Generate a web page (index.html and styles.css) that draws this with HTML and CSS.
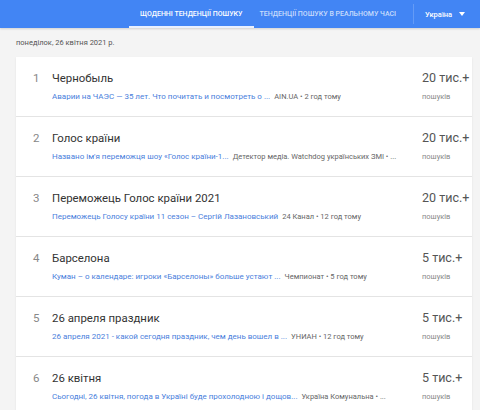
FILE: index.html
```html
<!DOCTYPE html>
<html lang="uk">
<head>
<meta charset="utf-8">
<link rel="stylesheet" href="styles.css">
</head>
<body>
<header class="topbar">
  <div class="tab tab-active">Щоденні тенденції пошуку</div>
  <div class="tab">Тенденції пошуку в реальному часі</div>
  <div class="region">Україна <span class="caret"></span></div>
</header>
<main class="content">
  <div class="date">понеділок, 26 квітня 2021 р.</div>
  <section class="card">
    <div class="row">
      <div class="num">1</div>
      <div class="main">
        <div class="title">Чернобыль</div>
        <div class="sub"><span class="link">Аварии на ЧАЭС — 35 лет. Что почитать и посмотреть о ...</span><span class="src">AIN.UA • 2 год тому</span></div>
      </div>
      <div class="metric"><div class="count">20 тис.+</div><div class="unit">пошуків</div></div>
    </div>
    <div class="row">
      <div class="num">2</div>
      <div class="main">
        <div class="title">Голос країни</div>
        <div class="sub"><span class="link">Названо ім'я переможця шоу «Голос країни-1...</span><span class="src">Детектор медіа. Watchdog українських ЗМІ • ...</span></div>
      </div>
      <div class="metric"><div class="count">20 тис.+</div><div class="unit">пошуків</div></div>
    </div>
    <div class="row">
      <div class="num">3</div>
      <div class="main">
        <div class="title">Переможець Голос країни 2021</div>
        <div class="sub"><span class="link">Переможець Голосу країни 11 сезон – Сергій Лазановський</span><span class="src">24 Канал • 12 год тому</span></div>
      </div>
      <div class="metric"><div class="count">20 тис.+</div><div class="unit">пошуків</div></div>
    </div>
    <div class="row">
      <div class="num">4</div>
      <div class="main">
        <div class="title">Барселона</div>
        <div class="sub"><span class="link">Куман – о календаре: игроки «Барселоны» больше устают ...</span><span class="src">Чемпионат • 5 год тому</span></div>
      </div>
      <div class="metric"><div class="count">5 тис.+</div><div class="unit">пошуків</div></div>
    </div>
    <div class="row">
      <div class="num">5</div>
      <div class="main">
        <div class="title">26 апреля праздник</div>
        <div class="sub"><span class="link">26 апреля 2021 - какой сегодня праздник, чем день вошел в ...</span><span class="src">УНИАН • 12 год тому</span></div>
      </div>
      <div class="metric"><div class="count">5 тис.+</div><div class="unit">пошуків</div></div>
    </div>
    <div class="row">
      <div class="num">6</div>
      <div class="main">
        <div class="title">26 квітня</div>
        <div class="sub"><span class="link">Сьогодні, 26 квітня, погода в Україні буде прохолодною і дощов...</span><span class="src">Україна Комунальна • ...</span></div>
      </div>
      <div class="metric"><div class="count">5 тис.+</div><div class="unit">пошуків</div></div>
    </div>
  </section>
</main>
</body>
</html>
```

FILE: styles.css
```css
* { box-sizing: border-box; }
html, body { margin: 0; padding: 0; }
body {
  width: 480px;
  height: 410px;
  overflow: hidden;
  background: #f4f4f4;
  font-family: Roboto, "Noto Sans", Arial, sans-serif;
}
.topbar {
  height: 28px;
  background: #4285f4;
  display: flex;
  align-items: stretch;
  padding-left: 129px;
  box-shadow: 0 1px 2px rgba(0,0,0,0.15);
}
.tab {
  display: flex;
  align-items: center;
  padding: 0 11px;
  font-size: 7px;
  font-weight: 500;
  text-transform: uppercase;
  color: rgba(255,255,255,0.72);
  white-space: nowrap;
  border-bottom: 2px solid transparent;
  padding-top: 2px;
}
.tab-active {
  color: #fff;
  border-bottom-color: #e8f0fe;
}
.tab + .tab { padding: 2px 17px 0 6px; }
.region {
  display: flex;
  align-items: center;
  gap: 7px;
  padding: 0 14px 0 11px;
  border-left: 1px solid rgba(255,255,255,0.18);
  margin: 4px 0;
  font-size: 7.5px;
  font-weight: 500;
  color: #fff;
  white-space: nowrap;
}
.caret {
  width: 0; height: 0;
  border-left: 3px solid transparent;
  border-right: 3px solid transparent;
  border-top: 4px solid #fff;
}
.content { padding: 0 8px 0 16px; }
.date {
  height: 29px;
  display: flex;
  align-items: center;
  font-size: 7.5px;
  color: #555;
  padding-bottom: 1px;
}
.card {
  background: #fff;
  box-shadow: 0 1px 2px rgba(0,0,0,0.08);
}
.row {
  display: flex;
  height: 60px;
  padding-top: 12px;
  border-bottom: 1px solid #e4e4e4;
}
.num {
  width: 36px;
  padding-left: 17px;
  font-size: 11.5px;
  line-height: 18px;
  color: #888;
}
.main { flex: 1; min-width: 0; }
.title {
  font-size: 11.4px;
  line-height: 18px;
  color: #333;
}
.sub {
  margin-top: 4px;
  font-size: 8px;
  line-height: 12px;
  white-space: nowrap;
  overflow: hidden;
}
.link { color: #4a80dc; }
.src { color: #666; margin-left: 4px; font-size: 7.5px; }
.metric { width: 50px; }
.count {
  font-size: 12.5px;
  line-height: 18px;
  color: #555;
  white-space: nowrap;
}
.unit {
  margin-top: 4px;
  font-size: 7.5px;
  line-height: 12px;
  color: #888;
}
```
